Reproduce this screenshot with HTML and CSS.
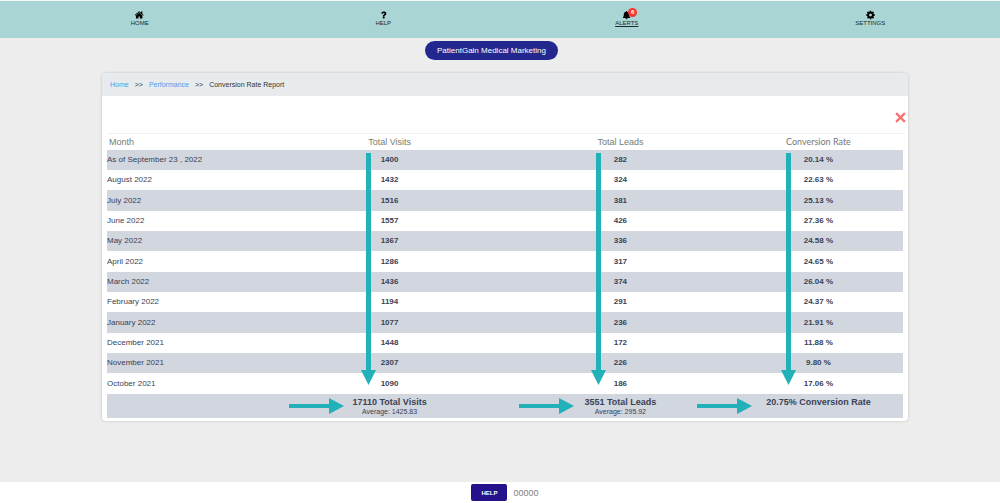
FILE: index.html
```html
<!DOCTYPE html>
<html lang="en">
<head>
    <meta charset="UTF-8">
    <meta name="viewport" content="width=device-width, initial-scale=1.0">
    <title>Conversion Rate Report</title>
    <link rel="stylesheet" href="styles.css">
</head>
<body>
    <nav class="topbar">
        <a href="#" class="nav-item">
            <svg class="nav-icon" viewBox="0 0 1792 1792"><path d="M1408 992v480q0 26-19 45t-45 19h-384v-384h-256v384h-384q-26 0-45-19t-19-45v-480q0-1 .5-3t.5-3l575-474 575 474q1 2 1 6zm223-69l-62 74q-8 9-21 11h-3q-13 0-21-7l-692-577-692 577q-12 8-24 7-13-2-21-11l-62-74q-8-10-7-23.5t11-21.5l719-599q32-26 76-26t76 26l244 204v-195q0-14 9-23t23-9h192q14 0 23 9t9 23v408l219 182q10 8 11 21.5t-7 23.5z"/></svg>
            <span>HOME</span>
        </a>
        <a href="#" class="nav-item">
            <svg class="nav-icon" viewBox="0 0 1792 1792"><path d="M1088 1256v240q0 16-12 28t-28 12h-240q-16 0-28-12t-12-28v-240q0-16 12-28t28-12h240q16 0 28 12t12 28zm316-600q0 54-15.500 101t-35 76.500-55 59.500-57.500 43.500-61 35.500q-41 23-68.500 65t-27.500 67q0 17-12 32.500t-28 15.500h-240q-15 0-25.500-18.500t-10.500-37.500v-45q0-83 65-156.500t143-108.500q59-27 84-56t25-76q0-42-46.500-74t-107.500-32q-65 0-108 29-35 25-107 115-13 16-31 16-12 0-25-8l-164-125q-13-10-15.500-25t5.500-28q160-266 464-266 80 0 161 31t146 83 106 127.500 41 158.500z"/></svg>
            <span>HELP</span>
        </a>
        <a href="#" class="nav-item active">
            <span class="bell">
                <svg class="nav-icon" viewBox="0 0 14 14"><path d="M7 1.500c.6 0 1 .4 1 1 1.900.5 2.800 2 2.800 4 0 2.300.6 3.500 1.900 4.700H1.300C2.600 10 3.200 8.800 3.200 6.500c0-2 .9-3.500 2.800-4 0-.6.400-1 1-1zM5.400 11.600h3.200a1.600 1.400 0 0 1-3.200 0z"/></svg>
                <span class="badge">6</span>
            </span>
            <span>ALERTS</span>
        </a>
        <a href="#" class="nav-item">
            <svg class="nav-icon" viewBox="0 0 1792 1792"><path d="M1152 896q0-106-75-181t-181-75-181 75-75 181 75 181 181 75 181-75 75-181zm512-109v222q0 12-8 23t-20 13l-185 28q-19 54-39 91 35 50 107 138 10 12 10 25t-9 23q-27 37-99 108t-94 71q-12 0-26-9l-138-108q-44 23-91 38-16 136-29 186-7 28-36 28h-222q-14 0-24.500-8.500t-11.500-21.500l-28-184q-49-16-90-37l-141 107q-10 9-25 9-14 0-25-11-126-114-165-168-7-10-7-23 0-12 8-23 15-21 51-66.500t54-70.500q-27-50-41-99l-183-27q-13-2-21-12.500t-8-23.500v-222q0-12 8-23t19-13l186-28q14-46 39-92-40-57-107-138-10-12-10-24 0-10 9-23 26-36 98.500-107.500t94.500-71.500q13 0 26 10l138 107q44-23 91-38 16-136 29-186 7-28 36-28h222q14 0 24.500 8.500t11.500 21.500l28 184q49 16 90 37l142-107q9-9 24-9 13 0 25 10 129 119 165 170 7 8 7 22 0 12-8 23-15 21-51 66.500t-54 70.500q26 50 41 98l183 28q13 2 21 12.500t8 23.500z"/></svg>
            <span>SETTINGS</span>
        </a>
    </nav>

    <main class="content">
        <div class="account">
            <button type="button" class="account-btn">PatientGain Medical Marketing</button>
        </div>

        <section class="card">
            <div class="breadcrumb">
                <a href="#">Home</a>
                <span class="sep">&gt;&gt;</span>
                <a href="#">Performance</a>
                <span class="sep">&gt;&gt;</span>
                <span>Conversion Rate Report</span>
            </div>

            <div class="card-tools">
                <button type="button" class="close-btn" aria-label="Close">
                    <svg viewBox="0 0 10 10"><path d="M1 1l8 8M9 1l-8 8"/></svg>
                </button>
            </div>

            <table class="report">
                <colgroup>
                    <col class="col-month">
                    <col class="col-visits">
                    <col class="col-leads">
                    <col class="col-rate">
                </colgroup>
                <thead>
                    <tr><th>Month</th><th>Total Visits</th><th>Total Leads</th><th class="rate-head">Conversion Rate</th></tr>
                </thead>
                <tbody>
                    <tr>
                        <td>As of September 23 , 2022</td>
                        <td>1400<svg class="arrow-down" viewBox="0 0 16 232"><path d="M6 0h5v217h5L8.500 232 1 217h5z"/></svg></td>
                        <td>282<svg class="arrow-down" viewBox="0 0 16 232"><path d="M6 0h5v217h5L8.500 232 1 217h5z"/></svg></td>
                        <td>20.14 %<svg class="arrow-down arrow-rate" viewBox="0 0 16 232"><path d="M6 0h5v217h5L8.500 232 1 217h5z"/></svg></td>
                    </tr>
                    <tr><td>August 2022</td><td>1432</td><td>324</td><td>22.63 %</td></tr>
                    <tr><td>July 2022</td><td>1516</td><td>381</td><td>25.13 %</td></tr>
                    <tr><td>June 2022</td><td>1557</td><td>426</td><td>27.36 %</td></tr>
                    <tr><td>May 2022</td><td>1367</td><td>336</td><td>24.58 %</td></tr>
                    <tr><td>April 2022</td><td>1286</td><td>317</td><td>24.65 %</td></tr>
                    <tr><td>March 2022</td><td>1436</td><td>374</td><td>26.04 %</td></tr>
                    <tr><td>February 2022</td><td>1194</td><td>291</td><td>24.37 %</td></tr>
                    <tr><td>January 2022</td><td>1077</td><td>236</td><td>21.91 %</td></tr>
                    <tr><td>December 2021</td><td>1448</td><td>172</td><td>11.88 %</td></tr>
                    <tr><td>November 2021</td><td>2307</td><td>226</td><td>9.80 %</td></tr>
                    <tr><td>October 2021</td><td>1090</td><td>186</td><td>17.06 %</td></tr>
                </tbody>
                <tfoot>
                    <tr>
                        <td></td>
                        <td>
                            <div class="total">17110 Total Visits</div>
                            <div class="average">Average: 1425.83</div>
                            <svg class="arrow-right" viewBox="0 0 55 16"><path d="M0 6h40V0l15 8-15 8v-6H0z"/></svg>
                        </td>
                        <td>
                            <div class="total">3551 Total Leads</div>
                            <div class="average">Average: 295.92</div>
                            <svg class="arrow-right" viewBox="0 0 55 16"><path d="M0 6h40V0l15 8-15 8v-6H0z"/></svg>
                        </td>
                        <td>
                            <div class="total">20.75% Conversion Rate</div>
                            <svg class="arrow-right arrow-rate" viewBox="0 0 55 16"><path d="M0 6h40V0l15 8-15 8v-6H0z"/></svg>
                        </td>
                    </tr>
                </tfoot>
            </table>
        </section>
    </main>

    <footer class="bottombar">
        <button type="button" class="help-btn">HELP</button>
        <span class="code">00000</span>
    </footer>
</body>
</html>
```
FILE: styles.css
```css
:root {
    --teal: #22b0b9;
    --stripe: #d2d6de;
    --navy: #22288e;
}

* {
    box-sizing: border-box;
}

body {
    margin: 0;
    min-height: 100vh;
    display: flex;
    flex-direction: column;
    background: #ededed;
    font-family: "Liberation Sans", Arial, sans-serif;
    font-size: 8px;
    color: #3a4256;
}

button {
    font-family: inherit;
    border: none;
    cursor: pointer;
}

/* top navigation */
.topbar {
    display: grid;
    grid-template-columns: repeat(4, 1fr);
    height: 38px;
    padding: 9px 8px 0 18px;
    background: #a9d5d4;
    border-top: 1px solid #f4fafa;
}

.nav-item {
    display: flex;
    flex-direction: column;
    align-items: center;
    font-size: 6px;
    line-height: 6px;
    color: #1b2b2b;
    text-decoration: none;
}

.nav-item.active {
    text-decoration: underline;
}

.nav-icon {
    display: block;
    width: 11px;
    height: 10px;
    fill: #000;
}

.bell {
    position: relative;
}

.badge {
    position: absolute;
    top: -2px;
    left: 7px;
    width: 9px;
    height: 9px;
    border-radius: 50%;
    background: #f8372d;
    color: #fff;
    font-size: 6px;
    font-weight: bold;
    line-height: 9px;
    text-align: center;
}

/* page content */
.content {
    flex: 1;
    padding: 3px 8px 0 18px;
}

.account {
    display: flex;
    justify-content: center;
    padding-right: 27px;
}

.account-btn {
    height: 19px;
    padding: 0 12px;
    border-radius: 10px;
    background: var(--navy);
    color: #fff;
    font-size: 8px;
}

.card {
    margin: 13px 84px 0;
    padding-bottom: 3px;
    background: #fff;
    border-radius: 4px;
    box-shadow: 0 0 3px rgba(0, 0, 0, 0.2);
}

.breadcrumb {
    display: flex;
    align-items: center;
    gap: 6px;
    height: 23px;
    padding: 0 8px;
    border-radius: 4px 4px 0 0;
    background: #e7ebee;
    color: #333;
    font-size: 7px;
}

.breadcrumb a {
    color: #4f9bea;
    text-decoration: none;
}

.card-tools {
    display: flex;
    justify-content: flex-end;
    align-items: center;
    height: 37px;
    padding: 5px 2px 0;
}

.close-btn {
    width: 11px;
    height: 11px;
    padding: 0;
    background: none;
}

.close-btn svg {
    display: block;
    stroke: #f87171;
    stroke-width: 2;
    fill: none;
}

/* report table */
.report {
    width: calc(100% - 10px);
    margin: 0 5px;
    border-collapse: separate;
    border-spacing: 0;
    table-layout: fixed;
}

.col-month { width: 21%; }
.col-visits { width: 29%; }
.col-leads { width: 29%; }
.col-rate { width: 21%; }

.report th {
    height: 17px;
    padding: 0;
    border-top: 1px solid #f0f0f0;
    color: #74806f;
    font-size: 9px;
    font-weight: normal;
    line-height: 10px;
}

.report th:first-child {
    padding-left: 2px;
    text-align: left;
}

.report .rate-head {
    font-family: Lato, "Liberation Sans", sans-serif;
    color: #777;
}

.report th:last-child,
.report td:last-child {
    padding-right: 2px;
}

.report td {
    position: relative;
    height: 20px;
    padding: 0;
    line-height: 10px;
    text-align: center;
    font-weight: bold;
}

.report tbody tr:nth-child(3n) td {
    height: 21px;
}

.report td:first-child {
    text-align: left;
    font-weight: normal;
}

.report tbody tr:nth-child(odd),
.report tfoot tr {
    background: var(--stripe);
}

.report tfoot td {
    height: 24px;
    padding-top: 3px;
    vertical-align: top;
}

.total {
    font-size: 9px;
    line-height: 10px;
}

.average {
    font-size: 7px;
    font-weight: normal;
    line-height: 9px;
}

/* arrows drawn over the table */
.arrow-down,
.arrow-right {
    position: absolute;
    z-index: 1;
    fill: var(--teal);
}

.arrow-down {
    top: 3px;
    left: calc(50% - 30px);
    width: 16px;
    height: 232px;
}

.arrow-down.arrow-rate {
    left: calc(50% - 39px);
}

.arrow-right {
    top: 4px;
    left: calc(50% - 101px);
    width: 55px;
    height: 16px;
}

.arrow-right.arrow-rate {
    left: calc(50% - 122px);
}

/* footer */
.bottombar {
    display: flex;
    justify-content: center;
    align-items: center;
    gap: 6px;
    height: 21px;
    padding: 0 8px 0 18px;
    background: #fff;
}

.help-btn {
    width: 36px;
    height: 17px;
    padding: 0;
    border-radius: 2px;
    background: #23128c;
    color: #fff;
    font-size: 6px;
    font-weight: bold;
}

.code {
    color: #808080;
    font-size: 9px;
}
```
